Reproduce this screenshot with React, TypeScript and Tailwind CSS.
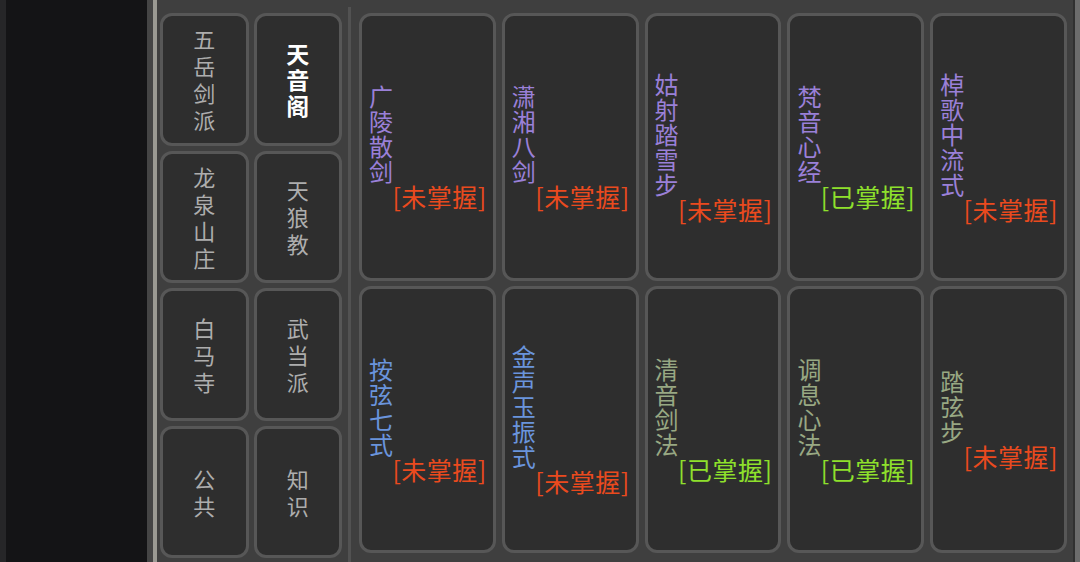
import type { FC } from 'react';

type Sect = { name: string; active?: boolean };

type Skill = {
  name: string;
  tone: 'purple' | 'blue' | 'sage';
  learned: boolean;
};

const sects: Sect[] = [
  { name: '五岳剑派' },
  { name: '天音阁', active: true },
  { name: '龙泉山庄' },
  { name: '天狼教' },
  { name: '白马寺' },
  { name: '武当派' },
  { name: '公共' },
  { name: '知识' },
];

const skills: Skill[] = [
  { name: '广陵散剑', tone: 'purple', learned: false },
  { name: '潇湘八剑', tone: 'purple', learned: false },
  { name: '姑射踏雪步', tone: 'purple', learned: false },
  { name: '梵音心经', tone: 'purple', learned: true },
  { name: '棹歌中流式', tone: 'purple', learned: false },
  { name: '按弦七式', tone: 'blue', learned: false },
  { name: '金声玉振式', tone: 'blue', learned: false },
  { name: '清音剑法', tone: 'sage', learned: true },
  { name: '调息心法', tone: 'sage', learned: true },
  { name: '踏弦步', tone: 'sage', learned: false },
];

const toneClass = {
  purple: 'text-[#9a80d8]',
  blue: 'text-[#6a94dc]',
  sage: 'text-[#98a883]',
};

const font = { fontFamily: '"Noto Sans CJK SC", "Noto Sans", sans-serif' };

const SectButton: FC<{ sect: Sect }> = ({ sect }) => (
  <button
    type="button"
    className="flex items-center justify-center rounded-[12px] border-[3px] border-[#575757] bg-[#2e2e2e]"
  >
    <div
      className={
        sect.active
          ? 'flex flex-col items-center text-[23px] leading-[26px] font-bold text-white'
          : 'flex flex-col items-center text-[22px] leading-[27px] text-[#adadad]'
      }
    >
      {[...sect.name].map((ch, i) => (
        <span key={i}>{ch}</span>
      ))}
    </div>
  </button>
);

const SkillCard: FC<{ skill: Skill }> = ({ skill }) => (
  <div className="flex flex-col justify-center rounded-[12px] border-[3px] border-[#575757] bg-[#2e2e2e] pl-[7px] pr-[6px]">
    <div className={`flex flex-col text-[24px] leading-[25px] ${toneClass[skill.tone]}`}>
      {[...skill.name].map((ch, i) => (
        <span key={i}>{ch}</span>
      ))}
    </div>
    <div
      className={`self-end text-[25px] leading-[27px] tracking-[0.5px] ${
        skill.learned ? 'text-[#8ee02c]' : 'text-[#ea4a1e]'
      }`}
    >
      {skill.learned ? '[已掌握]' : '[未掌握]'}
    </div>
  </div>
);

export default function App() {
  return (
    <div className="flex h-[562px] w-[1080px] overflow-hidden bg-[#3f3f3f]" style={font}>
      {/* left dark pane */}
      <div className="w-[147px] border-l-[6px] border-[#262628] bg-[#141416]" />
      <div className="w-[6px] bg-[#454545]" />
      <div className="w-[4px] bg-[#9b9a93]" />

      {/* sect list */}
      <div className="grid w-[185px] grid-cols-2 grid-rows-4 gap-[5px] pb-[4px] pl-[3px] pt-[13px]">
        {sects.map((s) => (
          <SectButton key={s.name} sect={s} />
        ))}
      </div>

      <div className="ml-[6px] mr-[8px] mt-[7px] w-[3px] bg-[#525252]" />

      {/* skills */}
      <div className="grid w-[708px] grid-cols-5 grid-rows-2 gap-x-[6px] gap-y-[5px] pb-[9px] pt-[13px]">
        {skills.map((s) => (
          <SkillCard key={s.name} skill={s} />
        ))}
      </div>

      <div className="ml-[6px] w-[2px] bg-[#303030]" />
      <div className="w-[5px] bg-[#6c6c6c]" />
    </div>
  );
}
